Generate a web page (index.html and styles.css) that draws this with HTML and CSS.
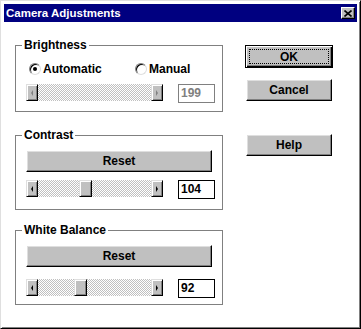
FILE: index.html
```html
<!DOCTYPE html>
<html lang="en">
<head>
    <meta charset="UTF-8">
    <title>Camera Adjustments</title>
    <link rel="stylesheet" href="styles.css">
</head>
<body>
    <div class="window">
        <div class="titlebar">
            <span class="title">Camera Adjustments</span>
            <span class="close">
                <svg width="8" height="7" viewBox="0 0 8 7"><path d="M0.5 0.5L7.5 6.5M7.5 0.5L0.5 6.5" stroke="#000" stroke-width="1.6"/></svg>
            </span>
        </div>

        <div class="content">
            <div class="groups">
                <fieldset class="group group-brightness">
                    <legend>Brightness</legend>
                    <div class="radios">
                        <label class="radio radio-auto"><span class="dot checked"></span>Automatic</label>
                        <label class="radio"><span class="dot"></span>Manual</label>
                    </div>
                    <div class="slider-row">
                        <div class="scrollbar disabled">
                            <span class="arrow left"></span>
                            <span class="track"></span>
                            <span class="arrow right"></span>
                        </div>
                        <div class="field disabled">199</div>
                    </div>
                </fieldset>

                <fieldset class="group group-contrast">
                    <legend>Contrast</legend>
                    <button class="btn reset">Reset</button>
                    <div class="slider-row">
                        <div class="scrollbar">
                            <span class="arrow left"></span>
                            <span class="track"><span class="thumb" style="margin-left: 41px"></span></span>
                            <span class="arrow right"></span>
                        </div>
                        <div class="field">104</div>
                    </div>
                </fieldset>

                <fieldset class="group group-white">
                    <legend>White Balance</legend>
                    <button class="btn reset">Reset</button>
                    <div class="slider-row">
                        <div class="scrollbar">
                            <span class="arrow left"></span>
                            <span class="track"><span class="thumb" style="margin-left: 36px"></span></span>
                            <span class="arrow right"></span>
                        </div>
                        <div class="field">92</div>
                    </div>
                </fieldset>
            </div>

            <div class="actions">
                <button class="btn btn-ok"><span class="focus">OK</span></button>
                <button class="btn btn-cancel">Cancel</button>
                <button class="btn btn-help">Help</button>
            </div>
        </div>
    </div>
</body>
</html>
```

FILE: styles.css
```css
body {
    margin: 0;
    background: #fff;
    font-family: "Liberation Sans", Arial, sans-serif;
    font-size: 12px;
    font-weight: bold;
    color: #000;
}
.window {
    width: 361px;
    height: 329px;
    box-sizing: border-box;
    border: 1px solid;
    border-color: #dfdfdf #000 #000 #dfdfdf;
    box-shadow: inset 1px 1px #fff, inset -1px -1px #808080;
    padding: 3px;
    background: #fff;
}
.titlebar {
    height: 18px;
    background: #000080;
    color: #fff;
    display: flex;
    align-items: center;
    justify-content: space-between;
    padding: 0 2px;
}
.title {
    font-size: 11.5px;
}
.close {
    width: 14px;
    height: 12px;
    box-sizing: border-box;
    background: #c0c0c0;
    border: 1px solid;
    border-color: #fff #000 #000 #fff;
    box-shadow: inset -1px -1px #808080;
    display: flex;
    align-items: center;
    justify-content: center;
}
.close svg {
    display: block;
}
.content {
    display: flex;
    padding: 16px 0 0 11px;
}
.groups {
    display: flex;
    flex-direction: column;
    width: 208px;
}
.group {
    margin: 0;
    min-width: 0;
    border: 1px solid #808080;
    padding: 8px 7px 8px 10px;
}
.group legend {
    padding: 0 2px;
    margin-left: -4px;
    line-height: 14px;
}
.group-brightness {
    padding-top: 10px;
}
.group-contrast {
    margin-top: 16px;
    padding-bottom: 10px;
}
.group-white {
    margin-top: 13px;
    padding-bottom: 6px;
}
.radios {
    display: flex;
    height: 14px;
    align-items: center;
}
.radio {
    display: flex;
    align-items: center;
    gap: 2px;
}
.radio-auto {
    width: 106px;
    margin-left: 3px;
}
.dot {
    width: 12px;
    height: 12px;
    box-sizing: border-box;
    border-radius: 50%;
    border: 1px solid;
    border-color: #808080 #dfdfdf #dfdfdf #808080;
    box-shadow: inset 1px 1px #000;
    background: #fff;
    display: flex;
    align-items: center;
    justify-content: center;
}
.dot.checked::after {
    content: "";
    width: 4px;
    height: 4px;
    border-radius: 50%;
    background: #000;
}
.slider-row {
    display: flex;
    justify-content: space-between;
    align-items: flex-start;
    margin-top: 8px;
}
.group-white .slider-row {
    margin-top: 12px;
}
.scrollbar {
    display: flex;
    width: 137px;
    height: 17px;
}
.arrow, .thumb {
    width: 12px;
    box-sizing: border-box;
    background: #c0c0c0;
    border: 1px solid;
    border-color: #dfdfdf #000 #000 #dfdfdf;
    box-shadow: inset 1px 1px #fff, inset -1px -1px #808080;
    display: flex;
    align-items: center;
    justify-content: center;
}
.thumb {
    width: 13px;
    height: 17px;
}
.arrow::before {
    content: "";
    border-top: 3px solid transparent;
    border-bottom: 3px solid transparent;
}
.arrow.left::before {
    border-right: 2px solid #000;
}
.arrow.right::before {
    border-left: 2px solid #000;
}
.disabled .arrow.left::before {
    border-right-color: #808080;
}
.disabled .arrow.right::before {
    border-left-color: #808080;
}
.track {
    flex: 1;
    display: flex;
    background: repeating-conic-gradient(#c0c0c0 0 25%, #fff 0 50%) 0 0 / 2px 2px;
}
.field {
    width: 37px;
    height: 19px;
    box-sizing: border-box;
    border: 1px solid #000;
    padding-left: 2px;
    line-height: 17px;
    background: #fff;
}
.field.disabled {
    color: #808080;
    border-color: #808080;
}
.btn {
    font: inherit;
    color: #000;
    background: #c0c0c0;
    height: 22px;
    padding: 0;
    box-sizing: border-box;
    border: 1px solid;
    border-color: #fff #000 #000 #fff;
    box-shadow: inset -1px -1px #808080, inset 1px 1px #dfdfdf;
    display: flex;
    align-items: center;
    justify-content: center;
}
.reset {
    width: 186px;
}
.actions {
    display: flex;
    flex-direction: column;
    margin-left: 23px;
    padding-top: 7px;
}
.actions .btn {
    width: 86px;
}
.actions .btn-ok {
    width: 88px;
    height: 23px;
    margin-left: -1px;
    border-color: #000;
    box-shadow: inset 1px 1px #fff, inset -1px -1px #000, inset -2px -2px #808080;
    padding: 3px;
}
.focus {
    flex: 1;
    align-self: stretch;
    display: flex;
    align-items: center;
    justify-content: center;
    border: 1px dotted #000;
}
.btn-cancel {
    margin-top: 11px;
}
.btn-help {
    margin-top: 33px;
}
```
